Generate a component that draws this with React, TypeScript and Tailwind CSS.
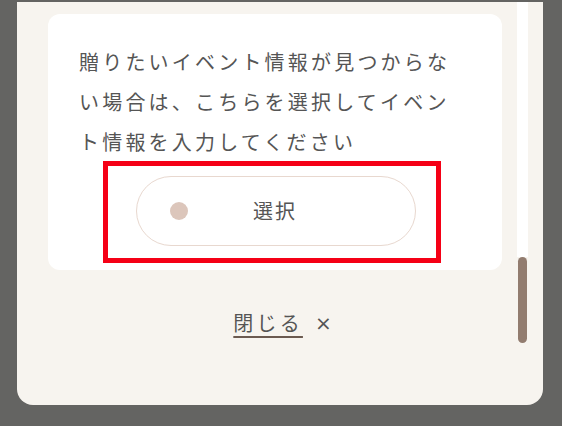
import React from 'react';

const jp = { fontFamily: '"Noto Sans CJK JP", "Noto Sans", sans-serif' };

export default function App() {
  return (
    <div className="w-[562px] h-[426px] bg-[#646462] pt-[2px] overflow-hidden" style={jp}>
      <div className="ml-[17px] w-[526px] h-[403px] bg-[#f7f4ef] rounded-b-[16px] flex">
        <div className="w-[500px] pl-[31px] pt-[12px]">
          <div className="w-[454px] bg-white rounded-[12px] pt-[28px] pb-[7px] px-[31px]">
            <p className="max-w-[380px] text-[20px] leading-[40px] tracking-[0.16em] text-[#555555]">
              贈りたいイベント情報が見つからない場合は、こちらを選択してイベント情報を入力してください
            </p>
            {/* highlight frame around the button */}
            <div className="ml-[24px] -mt-[1px] w-[338px] border-[5px] border-[#f50016] pl-[28px] pt-[10px] pb-[12px]">
              <button className="w-[280px] h-[70px] rounded-full border border-[#e8d8cf] bg-white flex items-center pl-[33px] text-[20px] tracking-[0.1em] text-[#555555]">
                <span className="w-[18px] h-[18px] rounded-full bg-[#dcc6bb]" />
                <span className="ml-[65px]">選択</span>
              </button>
            </div>
          </div>

          <div className="flex justify-center items-center mt-[39px] text-[20px] text-[#555555]">
            <span className="underline underline-offset-[5px] decoration-[#6b5a50] tracking-[0.16em] leading-[28px]">閉じる</span>
            <span className="ml-[12px] text-[20px] leading-none" style={{ fontFamily: '"DejaVu Sans", sans-serif' }}>×</span>
          </div>
        </div>

        {/* scrollbar */}
        <div className="w-[11px] flex flex-col items-center">
          <div className="w-[11px] h-[255px] bg-white" />
          <div className="w-[9px] h-[86px] rounded-full bg-[#927c6f]" />
        </div>
      </div>
    </div>
  );
}
